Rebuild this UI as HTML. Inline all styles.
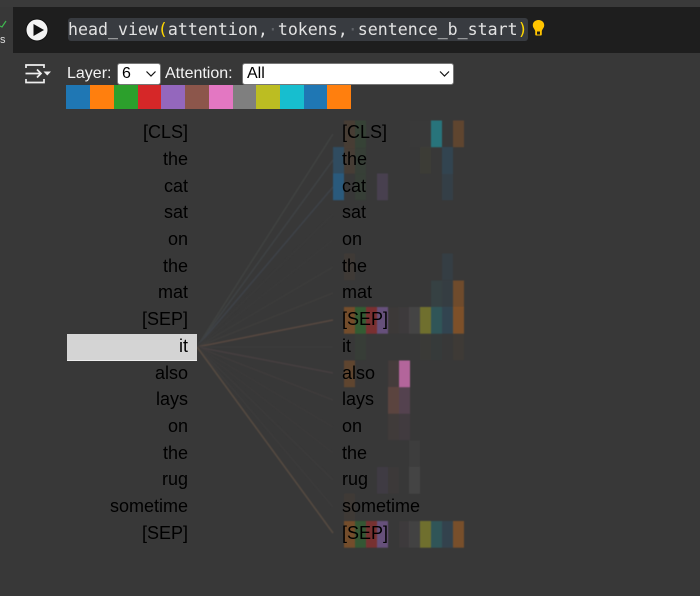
<!DOCTYPE html>
<html>
<head>
<meta charset="utf-8">
<style>
html,body{margin:0;padding:0;background:#383838;}
body{width:700px;height:596px;position:relative;overflow:hidden;font-family:"Liberation Sans",sans-serif;}
.abs{position:absolute;}
#cell{left:13px;top:7px;width:687px;height:46px;background:#1e1e1e;}
#hl{left:68px;top:18px;width:460px;height:23px;background:#383b40;border-radius:3px;}
#code{left:68px;top:19px;font:16.6px/21px "DejaVu Sans Mono",monospace;color:#e2e2e2;white-space:pre;}
#code b{font-weight:normal;color:#ffd700;}
#code i{font-style:normal;color:#5f6368;}
.lab{font-size:16px;line-height:20px;color:#f2f2f2;top:64px;}
.sel{background:#fff;border:1px solid #777;border-radius:3px;box-sizing:border-box;height:22px;top:63px;color:#000;font-size:16px;line-height:20px;padding-left:4px;}
.sw{top:85px;height:24px;}
.t{position:absolute;font-size:18px;line-height:27px;color:#000;white-space:pre;}
.l{right:512px;text-align:right;}
.r{left:342px;}
</style>
</head>
<body>
<div class="abs" style="left:0;top:0;width:700px;height:7px;background:#3a3a3a"></div>
<div class="abs" id="cell"></div>
<svg class="abs" style="left:0;top:18px" width="8" height="12"><path d="M0 8 L2 9 L6 3" stroke="#3fb950" stroke-width="1.2" fill="none"/></svg>
<div class="abs" style="left:0;top:33px;font-size:11px;line-height:14px;color:#ddd">s</div>
<svg class="abs" style="left:25px;top:18px" width="24" height="24">
<circle cx="12" cy="12" r="11" fill="#f3f3f3" stroke="#111" stroke-width="1"/>
<path d="M8.500 6 L19 12 L8.500 18 Z" fill="#111"/>
</svg>
<div class="abs" id="hl"></div>
<div class="abs" id="code">head_view<b>(</b>attention,<i>·</i>tokens,<i>·</i>sentence_b_start<b>)</b></div>
<svg class="abs" style="left:531px;top:18px" width="15" height="19">
<path d="M7.500 2 C3.800 2 1.800 4.600 1.800 7.200 C1.800 9.800 3.600 10.800 4.200 13 L4.200 16.500 Q4.200 17.500 5.200 17.500 L9.800 17.500 Q10.800 17.500 10.800 16.500 L10.800 13 C11.400 10.800 13.200 9.800 13.200 7.200 C13.200 4.600 11.200 2 7.500 2 Z" fill="#ffc400"/>
<rect x="6" y="13.500" width="3" height="3" fill="#1e1e1e"/>
</svg>
<svg class="abs" style="left:24px;top:62px" width="28" height="24" fill="none" stroke="#eee" stroke-width="1.7">
<path d="M2 6 V3 H20 V6"/>
<path d="M2 17 V20.500 H20 V17"/>
<path d="M1.500 11.500 H17 M13 7.500 L17 11.500 L13 15.500"/>
<path d="M19.500 9.500 H27 L23.250 13.500 Z" fill="#eee" stroke="none"/>
</svg>
<div class="abs lab" style="left:67px">Layer:</div>
<div class="abs sel" style="left:117px;width:44px">6</div>
<svg class="abs" style="left:145px;top:70px" width="13" height="8"><path d="M1.500 1.500 L6 6 L10.500 1.500" stroke="#111" stroke-width="1.200" fill="none"/></svg>
<div class="abs lab" style="left:165px">Attention:</div>
<div class="abs sel" style="left:242px;width:212px">All</div>
<svg class="abs" style="left:439px;top:70px" width="13" height="8"><path d="M1 1.500 L5.500 6 L10 1.500" stroke="#111" stroke-width="1.200" fill="none"/></svg>

<div class="abs sw" style="left:66px;width:24px;background:#1f77b4"></div>
<div class="abs sw" style="left:90px;width:24px;background:#ff7f0e"></div>
<div class="abs sw" style="left:114px;width:24px;background:#2ca02c"></div>
<div class="abs sw" style="left:138px;width:23px;background:#d62728"></div>
<div class="abs sw" style="left:161px;width:24px;background:#9467bd"></div>
<div class="abs sw" style="left:185px;width:24px;background:#8c564b"></div>
<div class="abs sw" style="left:209px;width:24px;background:#e377c2"></div>
<div class="abs sw" style="left:233px;width:23px;background:#7f7f7f"></div>
<div class="abs sw" style="left:256px;width:24px;background:#bcbd22"></div>
<div class="abs sw" style="left:280px;width:24px;background:#17becf"></div>
<div class="abs sw" style="left:304px;width:23px;background:#1f77b4"></div>
<div class="abs sw" style="left:327px;width:24px;background:#ff7f0e"></div>

<svg class="abs" style="left:0;top:0;filter:blur(.4px)" width="700" height="596">
<g stroke-width="1.600" fill="none">
<path d="M197 347 L333 134" stroke="#404241"/>
<path d="M197 347 L333 160" stroke="#3f4244"/>
<path d="M197 347 L333 187" stroke="#3e4248"/>
<path d="M197 347 L333 214" stroke="#3a3a3a"/>
<path d="M197 347 L333 240" stroke="#3a3a3a"/>
<path d="M197 347 L333 267" stroke="#3c3c3b"/>
<path d="M197 347 L333 293" stroke="#3e3d3c"/>
<path d="M197 347 L333 320" stroke="#574840"/>
<path d="M197 347 L333 347" stroke="#3b3b3b"/>
<path d="M197 347 L333 373" stroke="#463f40"/>
<path d="M197 347 L333 400" stroke="#3f3c3c"/>
<path d="M197 347 L333 427" stroke="#3b3a3a"/>
<path d="M197 347 L333 453" stroke="#3b3a3a"/>
<path d="M197 347 L333 480" stroke="#3c3b3b"/>
<path d="M197 347 L333 507" stroke="#3c3b3b"/>
<path d="M197 347 L333 533" stroke="#554a41"/>
</g>
<!-- row 0 -->
<g>
<rect x="344" y="120.500" width="11" height="26.700" fill="#ff7f0e" opacity=".08"/>
<rect x="355" y="120.500" width="11" height="26.700" fill="#2ca02c" opacity=".1"/>
<rect x="431" y="120.500" width="11" height="26.700" fill="#17becf" opacity=".45"/>
<rect x="453" y="120.500" width="11" height="26.700" fill="#ff7f0e" opacity=".2"/>
<rect x="409" y="120.500" width="11" height="26.700" fill="#555" opacity=".06"/>
<rect x="420" y="120.500" width="11" height="26.700" fill="#555" opacity=".06"/>
</g>
<!-- row 1 -->
<g>
<rect x="333" y="147" width="11" height="26.700" fill="#1f77b4" opacity=".32"/>
<rect x="344" y="147" width="11" height="26.700" fill="#ff7f0e" opacity=".07"/>
<rect x="355" y="147" width="11" height="26.700" fill="#2ca02c" opacity=".07"/>
<rect x="420" y="147" width="11" height="26.700" fill="#bcbd22" opacity=".04"/>
<rect x="442" y="147" width="11" height="26.700" fill="#1f77b4" opacity=".2"/>
</g>
<!-- row 2 -->
<g>
<rect x="333" y="173.500" width="11" height="26.700" fill="#1f77b4" opacity=".55"/>
<rect x="355" y="173.500" width="11" height="26.700" fill="#2ca02c" opacity=".07"/>
<rect x="377" y="173.500" width="11" height="26.700" fill="#9467bd" opacity=".18"/>
<rect x="442" y="173.500" width="11" height="26.700" fill="#1f77b4" opacity=".13"/>
</g>
<!-- the, row 5 -->
<g>
<rect x="344" y="253.500" width="11" height="26.700" fill="#ff7f0e" opacity=".04"/>
<rect x="442" y="253.500" width="11" height="26.700" fill="#1f77b4" opacity=".1"/>
</g>
<!-- mat, row 6 -->
<g>
<rect x="431" y="280.500" width="11" height="26.700" fill="#17becf" opacity=".07"/>
<rect x="442" y="280.500" width="11" height="26.700" fill="#1f77b4" opacity=".09"/>
<rect x="453" y="280.500" width="11" height="26.700" fill="#ff7f0e" opacity=".28"/>
</g>
<!-- SEP, row 7 -->
<g>
<rect x="344" y="307" width="11" height="26.700" fill="#ff7f0e" opacity=".3"/>
<rect x="355" y="307" width="11" height="26.700" fill="#2ca02c" opacity=".35"/>
<rect x="366" y="307" width="11" height="26.700" fill="#d62728" opacity=".42"/>
<rect x="377" y="307" width="11" height="26.700" fill="#9467bd" opacity=".5"/>
<rect x="388" y="307" width="11" height="26.700" fill="#8c564b" opacity=".06"/>
<rect x="399" y="307" width="11" height="26.700" fill="#e377c2" opacity=".03"/>
<rect x="409" y="307" width="11" height="26.700" fill="#7f7f7f" opacity=".18"/>
<rect x="420" y="307" width="11" height="26.700" fill="#bcbd22" opacity=".42"/>
<rect x="431" y="307" width="11" height="26.700" fill="#17becf" opacity=".22"/>
<rect x="442" y="307" width="11" height="26.700" fill="#1f77b4" opacity=".2"/>
<rect x="453" y="307" width="11" height="26.700" fill="#ff7f0e" opacity=".35"/>
</g>
<!-- it -->
<g>
<rect x="355" y="333.500" width="11" height="26.700" fill="#2ca02c" opacity=".05"/>
<rect x="420" y="333.500" width="11" height="26.700" fill="#bcbd22" opacity=".02"/>
<rect x="431" y="333.500" width="11" height="26.700" fill="#17becf" opacity=".02"/>
<rect x="453" y="333.500" width="11" height="26.700" fill="#ff7f0e" opacity=".03"/>
</g>
<!-- also -->
<g>
<rect x="344" y="360.500" width="11" height="26.700" fill="#ff7f0e" opacity=".2"/>
<rect x="388" y="360.500" width="11" height="26.700" fill="#8c564b" opacity=".14"/>
<rect x="399" y="360.500" width="11" height="26.700" fill="#e377c2" opacity=".72"/>
</g>
<!-- lays -->
<g>
<rect x="388" y="387" width="11" height="26.700" fill="#8c564b" opacity=".42"/>
<rect x="399" y="387" width="11" height="26.700" fill="#e377c2" opacity=".17"/>
</g>
<!-- on -->
<g>
<rect x="388" y="413.500" width="11" height="26.700" fill="#8c564b" opacity=".1"/>
<rect x="399" y="413.500" width="11" height="26.700" fill="#e377c2" opacity=".05"/>
</g>
<!-- the -->
<g>
<rect x="409" y="440.500" width="11" height="26.700" fill="#7f7f7f" opacity=".08"/>
</g>
<!-- rug -->
<g>
<rect x="377" y="467" width="11" height="26.700" fill="#9467bd" opacity=".09"/>
<rect x="388" y="467" width="11" height="26.700" fill="#8c564b" opacity=".05"/>
<rect x="409" y="467" width="11" height="26.700" fill="#7f7f7f" opacity=".18"/>
</g>
<!-- sometime -->
<g>
<rect x="344" y="493.500" width="11" height="26.700" fill="#ff7f0e" opacity=".04"/>
</g>
<!-- SEP -->
<g>
<rect x="344" y="521" width="11" height="26.700" fill="#ff7f0e" opacity=".3"/>
<rect x="355" y="521" width="11" height="26.700" fill="#2ca02c" opacity=".3"/>
<rect x="366" y="521" width="11" height="26.700" fill="#d62728" opacity=".4"/>
<rect x="377" y="521" width="11" height="26.700" fill="#9467bd" opacity=".5"/>
<rect x="399" y="521" width="11" height="26.700" fill="#e377c2" opacity=".03"/>
<rect x="409" y="521" width="11" height="26.700" fill="#7f7f7f" opacity=".14"/>
<rect x="420" y="521" width="11" height="26.700" fill="#bcbd22" opacity=".42"/>
<rect x="431" y="521" width="11" height="26.700" fill="#17becf" opacity=".22"/>
<rect x="442" y="521" width="11" height="26.700" fill="#1f77b4" opacity=".18"/>
<rect x="453" y="521" width="11" height="26.700" fill="#ff7f0e" opacity=".32"/>
</g>
</svg>

<div class="abs" style="left:67px;top:334px;width:130px;height:27px;background:#d4d4d4;border-bottom:1px solid #eee;box-sizing:border-box"></div>

<div class="t l" style="top:119px">[CLS]</div>
<div class="t l" style="top:146px">the</div>
<div class="t l" style="top:173px">cat</div>
<div class="t l" style="top:199px">sat</div>
<div class="t l" style="top:226px">on</div>
<div class="t l" style="top:253px">the</div>
<div class="t l" style="top:279px">mat</div>
<div class="t l" style="top:306px">[SEP]</div>
<div class="t l" style="top:333px">it</div>
<div class="t l" style="top:360px">also</div>
<div class="t l" style="top:386px">lays</div>
<div class="t l" style="top:413px">on</div>
<div class="t l" style="top:440px">the</div>
<div class="t l" style="top:466px">rug</div>
<div class="t l" style="top:493px">sometime</div>
<div class="t l" style="top:520px">[SEP]</div>

<div class="t r" style="top:119px">[CLS]</div>
<div class="t r" style="top:146px">the</div>
<div class="t r" style="top:173px">cat</div>
<div class="t r" style="top:199px">sat</div>
<div class="t r" style="top:226px">on</div>
<div class="t r" style="top:253px">the</div>
<div class="t r" style="top:279px">mat</div>
<div class="t r" style="top:306px">[SEP]</div>
<div class="t r" style="top:333px">it</div>
<div class="t r" style="top:360px">also</div>
<div class="t r" style="top:386px">lays</div>
<div class="t r" style="top:413px">on</div>
<div class="t r" style="top:440px">the</div>
<div class="t r" style="top:466px">rug</div>
<div class="t r" style="top:493px">sometime</div>
<div class="t r" style="top:520px">[SEP]</div>
</body>
</html>
